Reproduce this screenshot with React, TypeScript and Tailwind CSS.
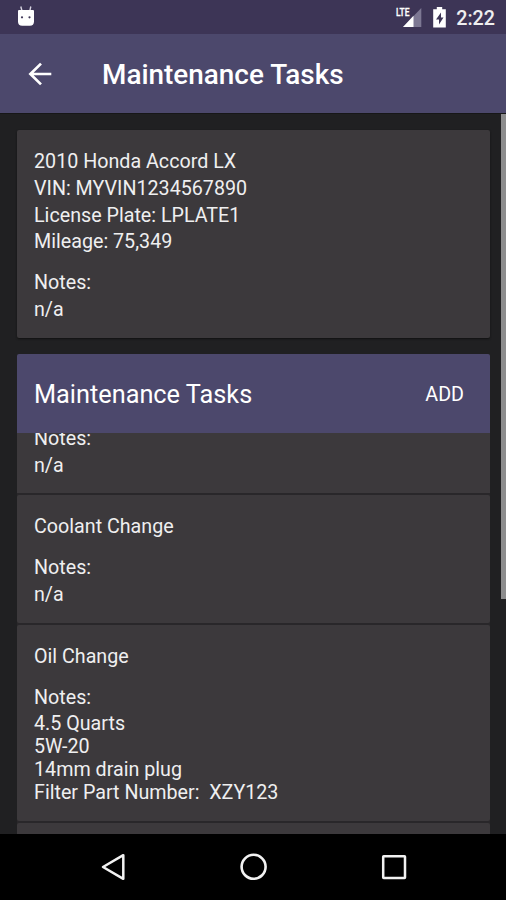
import type { ReactNode } from 'react';

interface Task {
    name: string;
    notes: string[];
}

const vehicle = [
    '2010 Honda Accord LX',
    'VIN: MYVIN1234567890',
    'License Plate: LPLATE1',
    'Mileage: 75,349',
];

const tasks: Task[] = [
    { name: 'Coolant Change', notes: ['n/a'] },
    { name: 'Oil Change', notes: ['4.5 Quarts', '5W-20', '14mm drain plug', 'Filter Part Number:  XZY123'] },
];

function Line({ children }: { children: ReactNode }) {
    return <p className="h-[26.7px] whitespace-pre">{children}</p>;
}

function Notes({ notes }: { notes: string[] }) {
    return (
        <div>
            <Line>Notes:</Line>
            {notes.map((note) => (
                <p key={note} className="whitespace-pre">{note}</p>
            ))}
        </div>
    );
}

function StatusBar() {
    return (
        <div className="flex h-[34px] shrink-0 items-center justify-between bg-[#3d3556] pl-4 pr-[11px]">
            <svg width="20" height="22" viewBox="0 0 20 22" fill="#fff">
                <path d="M4.8 .5 6 5M14.8 .5 13.8 5" stroke="#d8d5e2" strokeWidth="1.4" />
                <path d="M2 5Q2 4 3 4H17Q18 4 18 5V15.5Q18 19.7 13.8 19.7H6.2Q2 19.7 2 15.5Z" />
                <circle cx="6" cy="11.3" r="1.1" fill="#3d3556" />
                <circle cx="13.5" cy="11.3" r="1.1" fill="#3d3556" />
            </svg>
            <div className="flex items-center">
                <svg width="28" height="22" viewBox="0 0 28 22">
                    <path d="M26.3 2V21H8Z" fill="#7d7893" />
                    <path d="M18.5 9.8V21H8Z" fill="#fff" />
                    <text x="1" y="10" fill="#fff" stroke="#fff" strokeWidth="0.3" fontFamily="Roboto, sans-serif" fontSize="11" fontWeight="500" textLength="13.5" lengthAdjust="spacingAndGlyphs">LTE</text>
                </svg>
                <svg className="ml-[9px]" width="16" height="22" viewBox="0 0 16 22">
                    <path d="M1.2 3.3H4.8V1H10.2V3.3H13.8V21.5H1.2Z" fill="#fff" />
                    <path d="M9 6.5 4 13.5H7V18.5L11.5 11.5H9Z" fill="#3d3556" />
                </svg>
                <span className="ml-[8px] pt-[2px] text-[19.7px] font-medium leading-[23px]">2:22</span>
            </div>
        </div>
    );
}

function NavBar() {
    return (
        <div className="flex h-[66px] shrink-0 items-center justify-between bg-black px-[99px]">
            <svg width="28" height="30" viewBox="0 0 28 30" fill="none" stroke="#f2f2f2" strokeWidth="2.5" strokeLinejoin="round">
                <path d="M24.3 3.2V26.8L4 15Z" />
            </svg>
            <svg width="30" height="30" viewBox="0 0 30 30" fill="none" stroke="#f2f2f2" strokeWidth="2.6">
                <circle cx="15.6" cy="14.8" r="12" />
            </svg>
            <svg width="28" height="30" viewBox="0 0 28 30" fill="none" stroke="#f2f2f2" strokeWidth="2.5" strokeLinejoin="round">
                <rect x="4.2" y="4.2" width="21.8" height="21.8" rx="0.5" />
            </svg>
        </div>
    );
}

export default function App() {
    return (
        <div className="flex h-[900px] w-[506px] flex-col overflow-hidden bg-[#202022] font-[Roboto,sans-serif] text-[19.7px] leading-[23px] text-[#efeff0]">
            <StatusBar />
            <header className="flex h-[79px] shrink-0 items-center bg-[#4c486c] pl-[28px] text-white">
                <svg width="24" height="24" viewBox="0 0 24 24" fill="none" stroke="#fff" strokeWidth="2.7">
                    <path d="M23.3 12H2.6M13 1.6 2.4 12 13 22.4" />
                </svg>
                <h1 className="ml-[50px] pt-[3px] text-[27.9px] font-medium leading-[34px]">Maintenance Tasks</h1>
            </header>

            <div className="flex min-h-0 flex-1 justify-between border-t border-[#171718] pl-[17px]">
                <main className="flex w-[473px] flex-col pt-[16px]">
                    <section className="h-[208px] shrink-0 rounded-[2px] bg-[#3c393c] px-[17px] pt-[20.3px] shadow-[0_1px_2px_#111]">
                        {vehicle.map((line) => (
                            <Line key={line}>{line}</Line>
                        ))}
                        <div className="mt-[14px]">
                            <Notes notes={['n/a']} />
                        </div>
                    </section>

                    <section className="mt-[16px] flex min-h-0 flex-1 flex-col">
                        <div className="z-10 flex h-[79px] shrink-0 items-center justify-between rounded-t-[2px] bg-[#4c486c] pl-[17px] pr-[26px] text-white">
                            <h2 className="pt-[3px] text-[25.3px] leading-[30px]">Maintenance Tasks</h2>
                            <button type="button" className="pt-[2px] text-[19.7px]">ADD</button>
                        </div>
                        <div className="flex min-h-0 flex-1 flex-col gap-[2px] overflow-hidden bg-[#29272a]">
                            <div className="h-[60px] shrink-0 bg-[#3c393c] px-[17px]">
                                <div className="-mt-[6px]">
                                    <Notes notes={['n/a']} />
                                </div>
                            </div>
                            {tasks.map((task) => (
                                <div key={task.name} className="shrink-0 rounded-[2px] bg-[#3c393c] px-[17px] pb-[17px] pt-[20px]">
                                    <p className="mb-[18px]">{task.name}</p>
                                    <Notes notes={task.notes} />
                                </div>
                            ))}
                            <div className="h-[60px] shrink-0 rounded-[2px] bg-[#3c393c]" />
                        </div>
                    </section>
                </main>
                <div className="h-[485px] w-[5px] bg-[#8c8c8d]" />
            </div>

            <NavBar />
        </div>
    );
}
